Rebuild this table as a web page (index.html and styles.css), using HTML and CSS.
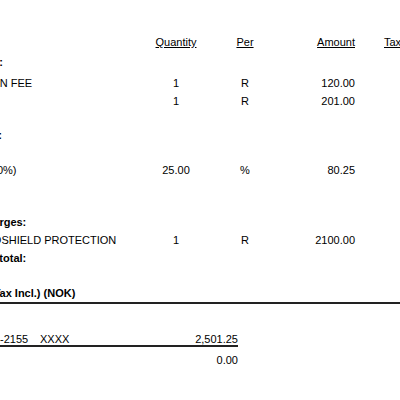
FILE: index.html
```html
<!DOCTYPE html>
<html lang="en">
<head>
<meta charset="utf-8">
<title>Invoice</title>
<link rel="stylesheet" href="styles.css">
</head>
<body>
<div class="sheet">
  <div class="row">
    <span class="label"></span>
    <span class="qty"><span class="u">Quantity</span></span>
    <span class="per"><span class="u">Per</span></span>
    <span class="amt"><span class="u">Amount</span></span>
    <span class="tax"><span class="u">Tax</span></span>
  </div>

  <div class="row section first">Program Fees:</div>
  <div class="row after-section">
    <span class="label">REGISTRATION FEE</span>
    <span class="qty">1</span>
    <span class="per">R</span>
    <span class="amt">120.00</span>
    <span class="tax"></span>
  </div>
  <div class="row">
    <span class="label">BOOKS</span>
    <span class="qty">1</span>
    <span class="per">R</span>
    <span class="amt">201.00</span>
    <span class="tax"></span>
  </div>

  <div class="row section gap-16">Commissions:</div>
  <div class="row gap-17">
    <span class="label">Discount (25.00%)</span>
    <span class="qty">25.00</span>
    <span class="per">%</span>
    <span class="amt">80.25</span>
    <span class="tax"></span>
  </div>

  <div class="row section gap-34">Overseas Charges:</div>
  <div class="row">
    <span class="label">HEALTH AUTOSHIELD PROTECTION</span>
    <span class="qty">1</span>
    <span class="per">R</span>
    <span class="amt">2100.00</span>
    <span class="tax"></span>
  </div>
  <div class="row section">Overseas Subtotal:</div>

  <div class="row section total gap-17">Grand Total (Tax Incl.) (NOK)</div>

  <div class="pay">
    <div class="pay-row ruled">
      <span>Payment: 2024-2155</span>
      <span>XXXX</span>
      <span class="amt">2,501.25</span>
    </div>
    <div class="pay-row balance">
      <span></span>
      <span></span>
      <span class="amt">0.00</span>
    </div>
  </div>
</div>
</body>
</html>
```

FILE: styles.css
```css
html, body {
  margin: 0;
  padding: 0;
  background: #fff;
  overflow: hidden;
}

body {
  font-family: "Liberation Sans", Arial, sans-serif;
  font-size: 11px;
  color: #000;
}

.sheet {
  margin-left: -74px;
  padding-top: 33px;
  width: 489px;
}

.row {
  display: grid;
  grid-template-columns: 224px 52px 86px 67px 60px;
  height: 18px;
  line-height: 18px;
  white-space: nowrap;
}

.qty, .per {
  text-align: center;
}

.amt {
  text-align: right;
}

.tax {
  padding-left: 29px;
}

.u {
  text-decoration: underline;
}

.section {
  display: block;
  font-weight: bold;
}

.first { margin-top: 2px; }
.after-section { margin-top: 3px; }
.gap-16 { margin-top: 16px; }
.gap-17 { margin-top: 17px; }
.gap-34 { margin-top: 34px; }

.total {
  border-bottom: 2px solid #222;
}

.pay {
  margin-top: 29px;
  width: 312px;
}

.pay-row {
  display: grid;
  grid-template-columns: 114px 110px 88px;
  white-space: nowrap;
}

.ruled {
  line-height: 12px;
  border-bottom: 2px solid #222;
}

.balance {
  line-height: 18px;
  padding-top: 4px;
}
```
